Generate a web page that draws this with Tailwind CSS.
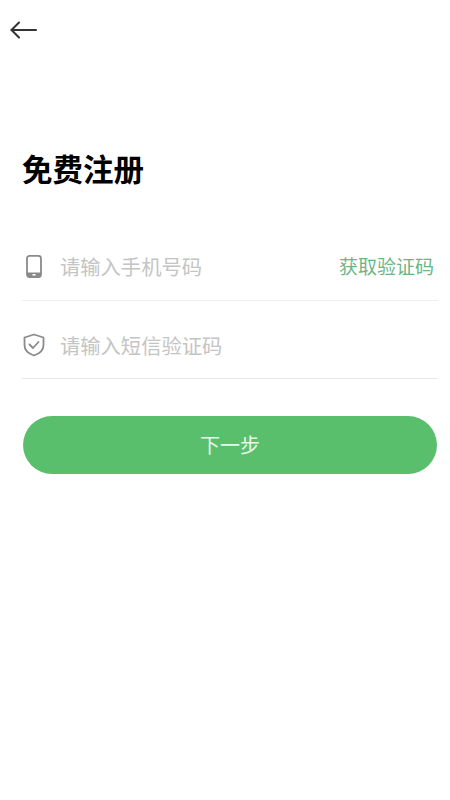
<!DOCTYPE html>
<html lang="zh-CN">
<head>
    <meta charset="UTF-8">
    <meta name="viewport" content="width=device-width, initial-scale=1.0">
    <title>免费注册</title>
    <script src="https://cdn.jsdelivr.net/npm/@tailwindcss/browser@4"></script>
</head>
<body class="bg-white font-['Noto_Sans_CJK_SC','Noto_Sans',sans-serif]">
    <div class="w-[450px] h-[800px] overflow-hidden bg-white">
        <!-- Top Bar -->
        <div class="h-[60px] pl-[10px] pt-[20px]">
            <svg width="28" height="20" viewBox="0 0 28 20" fill="none" stroke="#333" stroke-width="2" stroke-linecap="round" stroke-linejoin="round">
                <polyline points="9,2.5 1.5,10 9,17.5"></polyline>
                <line x1="1.5" y1="10" x2="26" y2="10"></line>
            </svg>
        </div>

        <h1 class="mt-[89px] ml-[22px] text-[30.5px] leading-[38px] font-bold text-black">免费注册</h1>

        <!-- Form -->
        <div class="mt-[42px] ml-[22px] w-[416px]">
            <div class="flex items-center h-[72px] pt-[4px] border-b border-[#eeeeee]">
                <div class="w-[24px] flex justify-center">
                    <svg width="16" height="23" viewBox="0 0 16 23" fill="none">
                        <rect x="1" y="0.9" width="14" height="21.2" rx="2.5" stroke="#8a8a8a" stroke-width="1.8"></rect>
                        <rect x="1" y="17.5" width="14" height="4.6" fill="#8a8a8a"></rect>
                        <rect x="6.5" y="19" width="3" height="1.6" fill="#fff"></rect>
                    </svg>
                </div>
                <span class="ml-[14px] text-[20.3px] text-[#c4c4c4]">请输入手机号码</span>
                <span class="ml-auto mr-[4px] text-[19px] text-[#6cb585]">获取验证码</span>
            </div>
            <div class="flex items-center h-[78px] pt-[11px] border-b border-[#e8e8e8]">
                <div class="w-[24px] flex justify-center">
                    <svg width="22" height="24" viewBox="0 0 22 24" fill="none" stroke="#8a8a8a" stroke-width="1.8" stroke-linecap="round" stroke-linejoin="round">
                        <path d="M11 1.5 L20.5 4.5 V12 C20.5 17.5 15.5 21 11 22.5 C6.5 21 1.5 17.5 1.5 12 V4.5 Z"></path>
                        <polyline points="6.5,11.5 10,15 15.5,9"></polyline>
                    </svg>
                </div>
                <span class="ml-[14px] text-[20.3px] text-[#c4c4c4]">请输入短信验证码</span>
            </div>
        </div>

        <!-- Next Button -->
        <div class="mt-[37px] ml-[23px] w-[414px] h-[58px] rounded-full bg-[#5abf6d] flex items-center justify-center text-[20px] text-[#e8f7ea]">下一步</div>
    </div>
</body>
</html>
